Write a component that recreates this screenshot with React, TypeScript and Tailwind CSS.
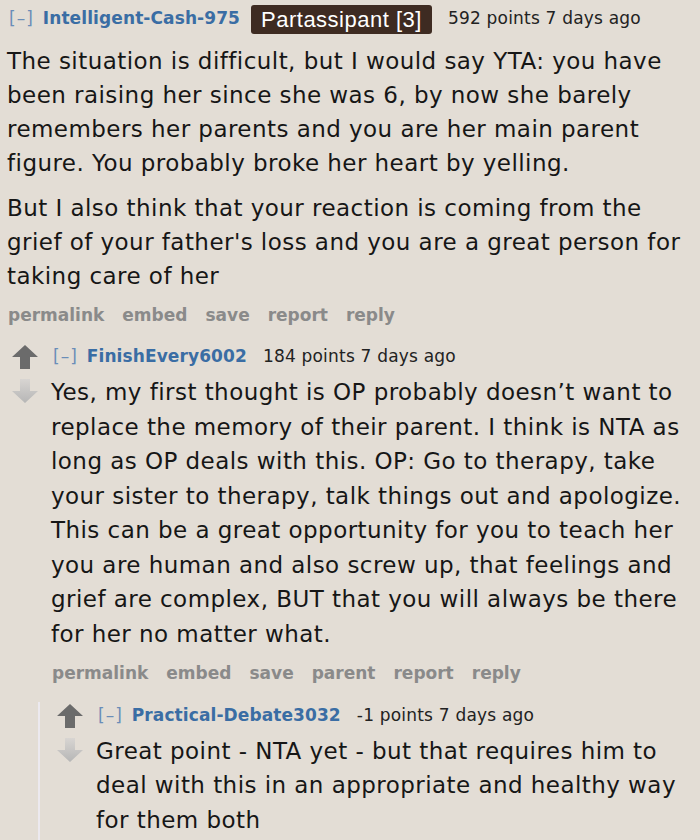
import React from 'react';

interface CommentProps {
  user: string;
  flair?: string;
  points: string;
  paragraphs: string[][];
  actions?: string[];
  arrows?: boolean;
  leading?: string;
  children?: React.ReactNode;
}

function UpArrow() {
  return (
    <svg width="26" height="24" viewBox="0 0 26 24">
      <path d="M13 0 L26 12 L18 12 L18 24 L8 24 L8 12 L0 12 Z" fill="#6b6b6b" />
    </svg>
  );
}

function DownArrow() {
  return (
    <svg width="26" height="24" viewBox="0 0 26 24">
      <defs>
        <linearGradient id="dn" x1="0" y1="0" x2="0" y2="1">
          <stop offset="0" stopColor="#d8d5d2" />
          <stop offset="1" stopColor="#b6b6b6" />
        </linearGradient>
      </defs>
      <path d="M8 0 L18 0 L18 12 L26 12 L13 24 L0 12 L8 12 Z" fill="url(#dn)" />
    </svg>
  );
}

function Comment({ user, flair, points, paragraphs, actions, arrows, leading = 'leading-[34.5px]', children }: CommentProps) {
  return (
    <div className="flex">
      {arrows && (
        <div className="w-[45px] shrink-0 flex flex-col items-start gap-[10px] pt-[2px] pl-[6px]">
          <UpArrow />
          <DownArrow />
        </div>
      )}
      <div className="flex-1 min-w-0">
        {/* tagline */}
        <div className="flex items-center h-[28px] whitespace-nowrap">
          <span className="text-[17px] text-[#6a8db8] ml-[2px] mr-[9px] tracking-[1px]">[–]</span>
          <span className="text-[17px] font-bold text-[#3a6da4] tracking-[0.1px]">{user}</span>
          {flair && (
            <span className="ml-[11px] mr-[16px] bg-[#3e2b22] text-white rounded-[3px] px-[10px] h-[29px] leading-[29px] text-[22px] tracking-[0.5px] font-['Liberation_Sans',sans-serif]">
              {flair}
            </span>
          )}
          <span className={`text-[17px] tracking-[0.2px] text-[#222] ${flair ? '' : 'ml-[16px]'}`}>{points}</span>
        </div>

        {/* body */}
        <div className={`text-[23px] tracking-[0.45px] text-[#161616] ${leading} ${flair ? 'mt-[11px]' : 'mt-[4px]'}`}>
          {paragraphs.map((lines, i) => (
            <p key={i} className={i > 0 ? 'mt-[11px]' : ''}>
              {lines.map((l, j) => (
                <span key={j} className="block whitespace-nowrap">{l}</span>
              ))}
            </p>
          ))}
        </div>

        {/* buttons */}
        {actions && (
          <div className="flex gap-[18px] text-[17px] font-bold text-[#8a8a8a] mt-[9px] h-[28px] items-center pl-[1px]">
            {actions.map((a) => (
              <span key={a}>{a}</span>
            ))}
          </div>
        )}

        {children}
      </div>
    </div>
  );
}

export default function App() {
  return (
    <div className="w-[700px] h-[840px] overflow-hidden bg-[#e3ddd5] font-['DejaVu_Sans',sans-serif] pl-[7px] pt-[5px]">
      <Comment
        user="Intelligent-Cash-975"
        flair="Partassipant [3]"
        points="592 points 7 days ago"
        leading="leading-[34px]"
        paragraphs={[
          [
            'The situation is difficult, but I would say YTA: you have',
            'been raising her since she was 6, by now she barely',
            'remembers her parents and you are her main parent',
            'figure. You probably broke her heart by yelling.',
          ],
          [
            'But I also think that your reaction is coming from the',
            "grief of your father's loss and you are a great person for",
            'taking care of her',
          ],
        ]}
        actions={['permalink', 'embed', 'save', 'report', 'reply']}
      />
      <div className="-ml-[7px] pl-[6px] mt-[13px]">
        <Comment
          arrows
          user="FinishEvery6002"
          points="184 points 7 days ago"
          paragraphs={[
            [
              'Yes, my first thought is OP probably doesn’t want to',
              'replace the memory of their parent. I think is NTA as',
              'long as OP deals with this. OP: Go to therapy, take',
              'your sister to therapy, talk things out and apologize.',
              'This can be a great opportunity for you to teach her',
              'you are human and also screw up, that feelings and',
              'grief are complex, BUT that you will always be there',
              'for her no matter what.',
            ],
          ]}
          actions={['permalink', 'embed', 'save', 'parent', 'report', 'reply']}
        >
          <div className="border-l-2 border-[#ece9ef] -ml-[13px] pl-[11px] mt-[14px] pb-[20px]">
            <Comment
              arrows
              user="Practical-Debate3032"
              points="-1 points 7 days ago"
              leading="leading-[34.4px]"
              paragraphs={[
                [
                  'Great point - NTA yet - but that requires him to',
                  'deal with this in an appropriate and healthy way',
                  'for them both',
                ],
              ]}
            />
          </div>
        </Comment>
      </div>
    </div>
  );
}
